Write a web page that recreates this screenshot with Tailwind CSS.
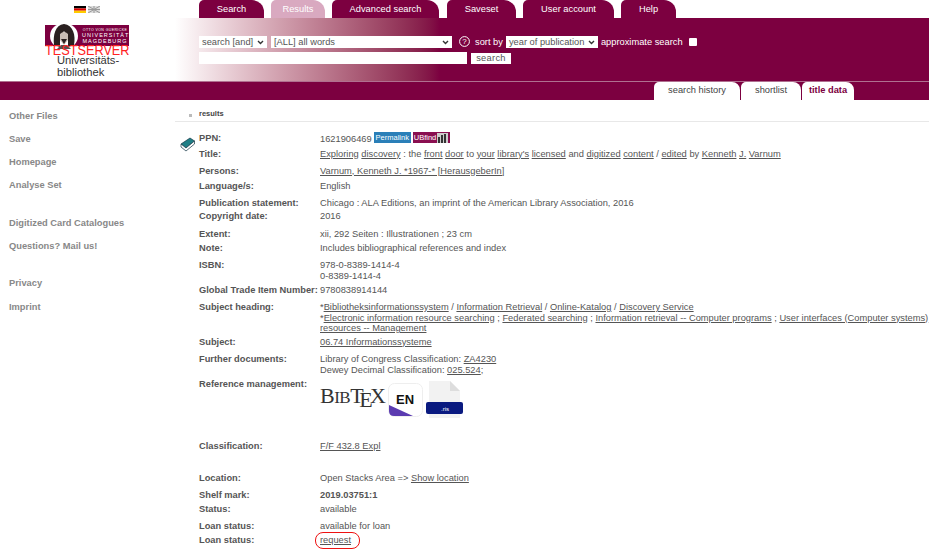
<!DOCTYPE html>
<html lang="en">
<head>
<meta charset="utf-8" />
<title>Results</title>
<script src="https://cdn.jsdelivr.net/npm/@tailwindcss/browser@4"></script>
</head>
<body class="bg-white font-['Liberation_Sans',Arial,sans-serif] text-[9.3px] text-[#555] w-[929px] h-[559px] overflow-hidden">
  <!-- header -->
  <div class="h-[81px] flex">
    <div class="w-[175px] shrink-0 relative">
      <div class="flex items-center gap-[2px] pt-[5px] pl-[74px] h-[13px]">
        <svg width="12" height="7" viewBox="0 0 12 7"><rect width="12" height="2.4" fill="#000"/><rect y="2.4" width="12" height="2.3" fill="#d00"/><rect y="4.7" width="12" height="2.3" fill="#fc0"/></svg>
        <svg width="12" height="7" viewBox="0 0 12 7"><rect width="12" height="7" fill="#ddd"/><path d="M0 0L12 7M12 0L0 7M6 0V7M0 3.5H12" stroke="#999" stroke-width="1"/></svg>
      </div>
      <div class="absolute left-[45px] top-[25px] w-[84px] h-[21px] bg-[#7c0040] flex">
        <svg class="ml-[5px] -mt-[2px]" width="28" height="26" viewBox="0 0 28 26"><ellipse cx="14" cy="13" rx="14" ry="13" fill="#fff"/><path d="M4 22C3 12 5 2 14 1C23 2 26 12 24 22L18 24V14L14 8L10 14V24Z" fill="#2a2020"/><path d="M10 11Q14 7 18 11V17L14 22L10 17Z" fill="#cbbdb6"/><path d="M11 16H17L14 21Z" fill="#2a2020"/><path d="M7 26L11 22H17L21 26Z" fill="#555"/></svg>
        <div class="ml-[4px] mt-[3px] text-white text-center w-[46px]">
          <div class="text-[3.5px] leading-[4px] tracking-[0.4px] whitespace-nowrap">OTTO VON GUERICKE</div>
          <div class="text-[5.5px] leading-[6px] tracking-[1px] whitespace-nowrap">UNIVERSITÄT</div>
          <div class="text-[5.5px] leading-[6px] tracking-[1px] whitespace-nowrap">MAGDEBURG</div>
        </div>
      </div>
      <div class="absolute left-[45px] top-[42px] text-[15.5px] leading-[15px] text-[#f22] scale-x-[0.82] origin-left whitespace-nowrap">TESTSERVER</div>
      <div class="absolute left-[57px] top-[55px] text-[11.2px] leading-[11.5px] text-[#333]">Universitäts-<br>bibliothek</div>
    </div>
    <div class="flex-1 flex flex-col">
      <!-- main tabs -->
      <div class="h-[18px] flex pl-[24px] text-white">
        <div class="w-[65px] bg-[#7c0040] rounded-tl-[5px] rounded-tr-[12px] text-center leading-[18px]">Search</div>
        <div class="ml-[7px] w-[54px] bg-[#d9a9c0] rounded-tl-[5px] rounded-tr-[12px] text-center leading-[18px]">Results</div>
        <div class="ml-[7px] w-[107px] bg-[#7c0040] rounded-tl-[5px] rounded-tr-[12px] text-center leading-[18px]">Advanced search</div>
        <div class="ml-[8px] w-[69px] bg-[#7c0040] rounded-tl-[5px] rounded-tr-[12px] text-center leading-[18px]">Saveset</div>
        <div class="ml-[7px] w-[91px] bg-[#7c0040] rounded-tl-[5px] rounded-tr-[12px] text-center leading-[18px]">User account</div>
        <div class="ml-[7px] w-[55px] bg-[#7c0040] rounded-tl-[5px] rounded-tr-[12px] text-center leading-[18px]">Help</div>
      </div>
      <!-- search form -->
      <div class="flex-1 bg-linear-to-r from-white to-[#7c0040] to-[265px] pl-[24px] pt-[18px] text-white">
        <div class="flex items-center h-[12px] whitespace-nowrap">
          <div class="w-[68px] h-[12px] bg-white text-[#555] px-[3px] pt-[1px] flex justify-between items-center">search [and]<svg width="7" height="5" viewBox="0 0 7 5"><path d="M1 1L3.5 3.5L6 1" fill="none" stroke="#333" stroke-width="1.4"/></svg></div>
          <div class="ml-[4px] w-[181px] h-[12px] bg-white text-[#555] px-[3px] pt-[1px] flex justify-between items-center">[ALL] all words<svg width="7" height="5" viewBox="0 0 7 5"><path d="M1 1L3.5 3.5L6 1" fill="none" stroke="#333" stroke-width="1.4"/></svg></div>
          <svg class="ml-[7px] -mt-[2px]" width="11" height="11" viewBox="0 0 11 11"><circle cx="5.5" cy="5.5" r="4.9" fill="none" stroke="#fff" stroke-width="1"/><text x="5.5" y="8.4" text-anchor="middle" font-size="8" fill="#fff">?</text></svg>
          <span class="ml-[5px] mt-[1px]">sort by</span>
          <div class="ml-[3px] w-[92px] h-[12px] bg-white text-[#555] px-[3px] pt-[1px] flex justify-between items-center">year of publication<svg width="7" height="5" viewBox="0 0 7 5"><path d="M1 1L3.5 3.5L6 1" fill="none" stroke="#333" stroke-width="1.4"/></svg></div>
          <span class="ml-[3px] mt-[1px]">approximate search</span>
          <div class="ml-[6px] w-[8px] h-[8px] bg-white rounded-[1px]"></div>
        </div>
        <div class="flex mt-[4px]">
          <div class="w-[268px] h-[12px] bg-white"></div>
          <div class="ml-[4px] mt-[1px] w-[40px] h-[11px] bg-white text-[#555] leading-[11px] text-center tracking-[0.3px]">search</div>
        </div>
      </div>
    </div>
  </div>
  <!-- sub bar -->
  <div class="h-[19px] bg-[#7c0040] border-t border-[#b07090] flex items-end pl-[654px]">
    <div class="w-[86px] h-[18px] bg-white rounded-tl-[5px] rounded-tr-[8px] text-[#444] text-center leading-[17px]">search history</div>
    <div class="ml-[1px] w-[60px] h-[18px] bg-white rounded-tl-[5px] rounded-tr-[8px] text-[#444] text-center leading-[17px]">shortlist</div>
    <div class="ml-[1px] w-[52px] h-[18px] bg-white rounded-tl-[5px] rounded-tr-[8px] text-[#7c0040] font-bold text-center leading-[17px]">title data</div>
  </div>
  <div class="flex">
    <!-- sidebar -->
    <nav class="w-[175px] shrink-0 pl-[9px] pt-[10px] font-bold text-[#888] leading-[13px]">
      <div>Other Files</div>
      <div class="mt-[10px]">Save</div>
      <div class="mt-[10px]">Homepage</div>
      <div class="mt-[10px]">Analyse Set</div>
      <div class="mt-[25px]">Digitized Card Catalogues</div>
      <div class="mt-[10px]">Questions? Mail us!</div>
      <div class="mt-[24px]">Privacy</div>
      <div class="mt-[11px]">Imprint</div>
    </nav>
    <main class="flex-1 relative">
      <div class="h-[22px] border-b border-[#e8e8e8] flex items-end pb-[2px] pl-[14px] text-[7.5px] font-bold text-[#444] gap-[7px]">
        <span class="w-[3px] h-[3px] bg-[#bbb] mb-[2px]"></span>results
      </div>
      <svg class="absolute left-[5px] top-[37px]" width="15" height="15" viewBox="0 0 15 15"><path d="M1 7L10 1L14.5 4L6 11Z" fill="#1f7f86" stroke="#134" stroke-width=".7"/><path d="M1 7V10L6 14L14.5 7V4L6 11Z" fill="#fff" stroke="#134" stroke-width=".7"/></svg>
      <div class="pl-[24px] pt-[8px] w-[754px] leading-[11px] whitespace-nowrap">
        <div class="flex h-[16px] items-center"><b class="w-[121px] shrink-0">PPN:</b><span class="mt-[2px]">1621906469</span><span class="ml-[2px] -mt-[1px] w-[37px] text-center bg-[#2a7fb8] text-white text-[7.5px] leading-[11px]">Permalink</span><span class="ml-[2px] -mt-[1px] w-[37px] pl-[1px] bg-[#8a0f50] text-white text-[7.5px] leading-[11px] flex items-end">UBfind<svg class="ml-[1px]" width="11" height="10" viewBox="0 0 11 10"><rect x="0" width="11" height="10" fill="#ccc"/><path d="M1 4h2v6H1zM4 2h2v8H4zM7 1h2v9H7z" fill="#333"/></svg></span></div>
        <div class="flex h-[16px] items-center"><b class="w-[121px] shrink-0">Title:</b><span><u>Exploring</u> <u>discovery</u> : the <u>front</u> <u>door</u> to <u>your</u> <u>library's</u> <u>licensed</u> and <u>digitized</u> <u>content</u> / <u>edited</u> by <u>Kenneth</u> <u>J.</u> <u>Varnum</u></span></div>
        <div class="flex h-[18px] items-center"><b class="w-[121px] shrink-0">Persons:</b><u>Varnum, Kenneth J. *1967-* [HerausgeberIn]</u></div>
        <div class="flex h-[12px] items-center"><b class="w-[121px] shrink-0">Language/s:</b>English</div>
        <div class="flex h-[14px] mt-[4px] items-center"><b class="w-[121px] shrink-0">Publication statement:</b>Chicago : ALA Editions, an imprint of the American Library Association, 2016</div>
        <div class="flex h-[12px] items-center"><b class="w-[121px] shrink-0">Copyright date:</b>2016</div>
        <div class="flex h-[15px] mt-[5px] items-center"><b class="w-[121px] shrink-0">Extent:</b>xii, 292 Seiten : Illustrationen ; 23 cm</div>
        <div class="flex h-[12px] items-center"><b class="w-[121px] shrink-0">Note:</b>Includes bibliographical references and index</div>
        <div class="flex mt-[6px] h-[23px]"><b class="w-[121px] shrink-0">ISBN:</b><div>978-0-8389-1414-4<br>0-8389-1414-4</div></div>
        <div class="flex h-[14px] items-center"><b class="w-[121px] shrink-0">Global Trade Item Number:</b>9780838914144</div>
        <div class="flex mt-[5px] h-[32px]"><b class="w-[121px] shrink-0">Subject heading:</b><div class="leading-[10.5px]">*<u>Bibliotheksinformationssystem</u> / <u>Information Retrieval</u> / <u>Online-Katalog</u> / <u>Discovery Service</u><br>*<u>Electronic information resource searching</u> ; <u>Federated searching</u> ; <u>Information retrieval -- Computer programs</u> ; <u>User interfaces (Computer systems)</u><br><u>resources -- Management</u></div></div>
        <div class="flex h-[14px] mt-[1px] items-center"><b class="w-[121px] shrink-0">Subject:</b><u>06.74 Informationssysteme</u></div>
        <div class="flex mt-[5px] h-[23px]"><b class="w-[121px] shrink-0">Further documents:</b><div class="leading-[11px]">Library of Congress Classification: <u>ZA4230</u><br>Dewey Decimal Classification: <u>025.524</u>;</div></div>
        <div class="flex h-[62px]">
          <b class="w-[121px] shrink-0 mt-[2px]">Reference management:</b>
          <div class="flex items-start">
            <span class="font-['Liberation_Serif',serif] text-[#333] text-[22px] leading-[24px] mt-[7px] w-[68px] tracking-[-0.5px]">B<span class="text-[17px]">IB</span>T<span class="relative top-[4px] -ml-[4px] -mr-[2px]">E</span>X</span>
            <svg class="mt-[6px]" width="35" height="34" viewBox="0 0 35 34"><rect x=".5" y=".5" width="34" height="33" rx="6" fill="#fff" stroke="#eee"/><path d="M1 22L25 33H6Q1 33 1 28Z" fill="#5b3bb0"/><text x="17" y="21" text-anchor="middle" font-family="Liberation Sans" font-weight="700" font-size="13" fill="#111">EN</text></svg>
            <svg class="ml-[3px] mt-[3px]" width="37" height="41" viewBox="0 0 37 41"><path d="M3 1H24L34 11V38H3Z" fill="#f2f2f2"/><path d="M24 1V11H34Z" fill="#ddd"/><rect y="22" width="37" height="12" rx="2" fill="#0a1a80"/><text x="19" y="31" text-anchor="middle" font-family="Liberation Sans" font-size="6" fill="#fff">.ris</text></svg>
          </div>
        </div>
        <div class="flex h-[14px] items-center"><b class="w-[121px] shrink-0">Classification:</b><u>F/F 432.8 Expl</u></div>
        <div class="flex h-[14px] mt-[18px] items-center"><b class="w-[121px] shrink-0">Location:</b>Open Stacks Area =&gt;&nbsp;<u>Show location</u></div>
        <div class="flex h-[14px] mt-[3px] items-center"><b class="w-[121px] shrink-0">Shelf mark:</b><b>2019.03751:1</b></div>
        <div class="flex h-[14px] items-center"><b class="w-[121px] shrink-0">Status:</b>available</div>
        <div class="flex h-[14px] mt-[3px] items-center"><b class="w-[121px] shrink-0">Loan status:</b>available for loan</div>
        <div class="flex h-[14px] items-center"><b class="w-[121px] shrink-0">Loan status:</b><u class="relative">request<span class="absolute -left-[5px] -top-[3px] w-[45px] h-[17px] border-[1.5px] border-[#e11] rounded-[8px]"></span></u></div>
      </div>
    </main>
  </div>
</body>
</html>
